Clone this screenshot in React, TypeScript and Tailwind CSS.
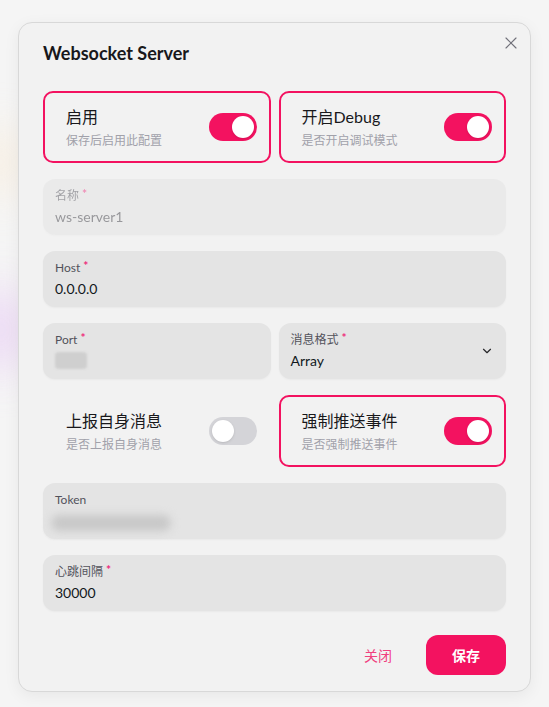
import React from 'react';
import { X, ChevronDown } from 'lucide-react';

const font = { fontFamily: 'Lato, "Noto Sans CJK SC", sans-serif' };

interface ToggleCardProps {
  title: string;
  desc: string;
  on: boolean;
}

const ToggleCard: React.FC<ToggleCardProps> = ({ title, desc, on }) => (
  <div
    className={`flex h-[72px] items-center justify-between rounded-[10px] border-2 py-3 pl-[21px] pr-3 ${
      on ? 'border-[#f31260]' : 'border-transparent'
    }`}
  >
    <div className="flex flex-col gap-1">
      <span className="text-[16px] leading-6 text-[#18181b]">{title}</span>
      <span className="text-[12px] leading-4 text-[#a1a1aa]">{desc}</span>
    </div>
    <div
      className={`flex h-7 w-12 items-center rounded-full px-[3px] ${
        on ? 'justify-end bg-[#f31260]' : 'justify-start bg-[#d4d4d8]'
      }`}
    >
      <div className="h-[22px] w-[22px] rounded-full bg-white shadow-sm" />
    </div>
  </div>
);

interface FieldProps {
  label: string;
  required?: boolean;
  disabled?: boolean;
  children: React.ReactNode;
  right?: React.ReactNode;
}

const Field: React.FC<FieldProps> = ({ label, required, disabled, children, right }) => (
  <div
    className={`flex h-14 items-center rounded-xl bg-[#e4e4e4] px-3 shadow-[0_1px_2px_rgba(0,0,0,0.04)] ${
      disabled ? 'opacity-50' : ''
    }`}
  >
    <div className="flex flex-1 flex-col">
      <span className="flex items-start text-[12px] leading-4 text-[#52525b]">
        {label}
        {required && (
          <span className="ml-[3px] text-[12px] font-bold leading-3 text-[#ee2a7b]">*</span>
        )}
      </span>
      <div className="mt-[3px] h-5 text-[14px] leading-5 text-[#11181c]">{children}</div>
    </div>
    {right}
  </div>
);

export default function App() {
  return (
    <div className="relative min-h-[707px] w-full overflow-hidden bg-[#f5f5f5]" style={font}>
      <div className="absolute -left-6 top-[130px] h-16 w-12 rounded-full bg-[#fbe9cf] opacity-60 blur-xl" />
      <div className="absolute -left-6 top-[290px] h-20 w-12 rounded-full bg-[#e7c9f5] opacity-80 blur-xl" />

      <div className="relative mx-auto mt-[22px] w-[513px] rounded-[14px] border border-[#d8d8d8] bg-[#f2f2f2] shadow-[0_4px_16px_rgba(0,0,0,0.06)]">
        <button className="absolute right-[9px] top-[10px] text-[#71717a]">
          <X size={20} strokeWidth={1.4} />
        </button>

        <div className="px-6 py-4">
          <h2 className="text-[18px] font-bold leading-7 text-[#18181b]">Websocket Server</h2>
        </div>

        <div className="flex flex-col gap-4 px-6 py-2">
          <div className="grid grid-cols-2 gap-2">
            <ToggleCard title="启用" desc="保存后启用此配置" on />
            <ToggleCard title="开启Debug" desc="是否开启调试模式" on />
          </div>

          <Field label="名称" required disabled>
            <span className="text-[#3f3f46]">ws-server1</span>
          </Field>

          <Field label="Host" required>
            0.0.0.0
          </Field>

          <div className="grid grid-cols-2 gap-2">
            <Field label="Port" required>
              <div className="mt-[1px] h-[17px] w-8 rounded-sm bg-[#cfcfcf] blur-[1px]" />
            </Field>
            <Field
              label="消息格式"
              required
              right={<ChevronDown size={14} strokeWidth={2} className="text-[#27272a]" />}
            >
              Array
            </Field>
          </div>

          <div className="grid grid-cols-2 gap-2">
            <ToggleCard title="上报自身消息" desc="是否上报自身消息" on={false} />
            <ToggleCard title="强制推送事件" desc="是否强制推送事件" on />
          </div>

          <Field label="Token">
            <div className="-ml-1 mt-1 h-[16px] w-[120px] rounded-full bg-[#c8c8c8] blur-[4px]" />
          </Field>

          <Field label="心跳间隔" required>
            30000
          </Field>
        </div>

        <div className="flex justify-end gap-2 px-6 py-4">
          <button className="h-10 w-20 rounded-xl text-[14px] text-[#f0407f]">关闭</button>
          <button className="h-10 w-20 rounded-xl bg-[#f31260] text-[14px] font-semibold text-white">
            保存
          </button>
        </div>
      </div>
    </div>
  );
}
